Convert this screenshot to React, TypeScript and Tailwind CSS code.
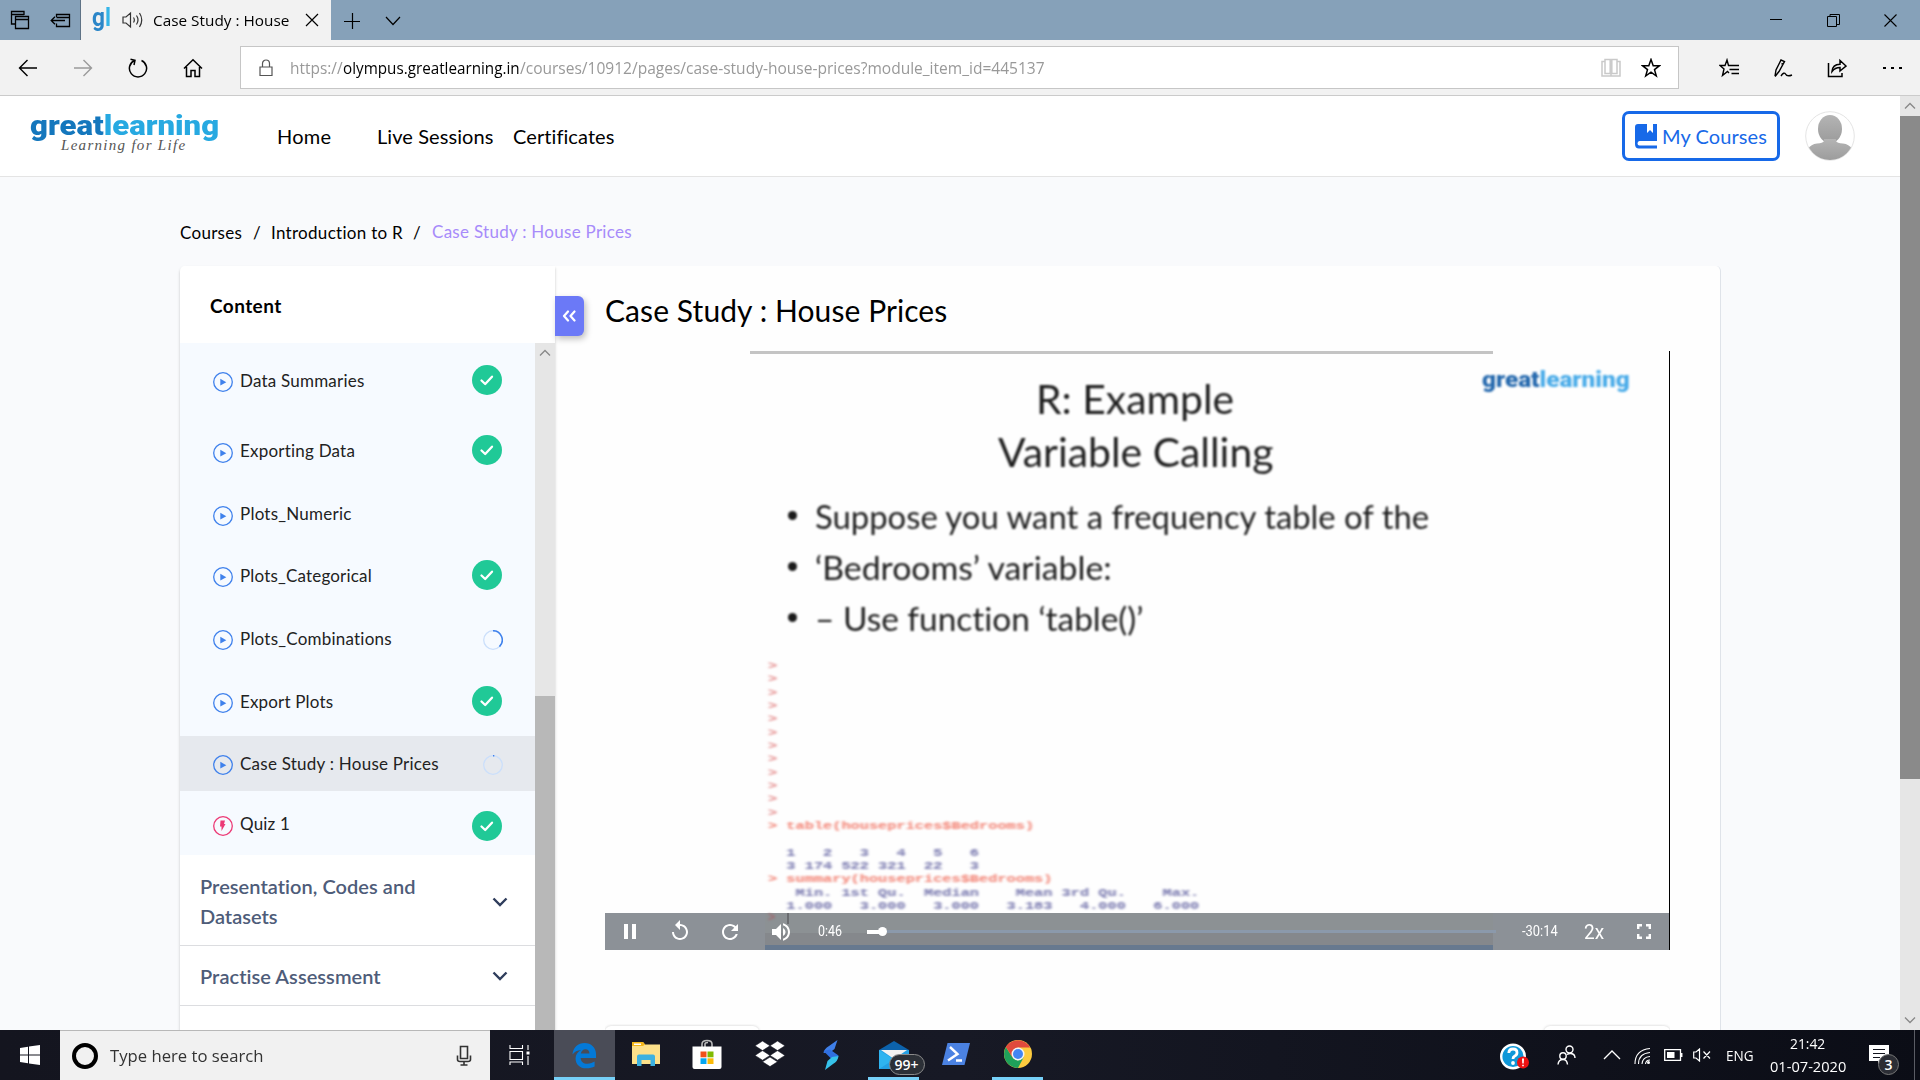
import React, { useLayoutEffect, useRef, useState } from "react";

type FitProps = { w: number; stretch?: boolean; className?: string; children: React.ReactNode };

/** Single line of text adjusted to an exact width, by tracking or by horizontal stretching. */
function Fit({ w, stretch = false, className = "", children }: FitProps) {
  const ref = useRef<HTMLSpanElement>(null);
  const [style, setStyle] = useState<React.CSSProperties>({});
  useLayoutEffect(() => {
    const el = ref.current;
    if (!el) return;
    const natural = el.offsetWidth;
    const n = (el.textContent || "").length;
    if (stretch) setStyle({ transform: `scaleX(${w / natural})` });
    else setStyle({ letterSpacing: `${(w - natural) / n}px` });
  }, [w, stretch]);
  return (
    <span className={`block shrink-0 whitespace-pre ${className}`} style={{ width: w }}>
      <span ref={ref} className="inline-block origin-left" style={style}>
        {children}
      </span>
    </span>
  );
}

const ui = "font-['Open_Sans',sans-serif]";

function Stroke({ w, h, children, className = "", sw = 1.4 }: { w: number; h: number; children: React.ReactNode; className?: string; sw?: number }) {
  return (
    <svg width={w} height={h} viewBox={`0 0 ${w} ${h}`} fill="none" stroke="currentColor" strokeWidth={sw} className={`block shrink-0 ${className}`}>
      {children}
    </svg>
  );
}

function TitleBar() {
  return (
    <div className="flex h-10 items-center bg-[#86a1b9] text-black">
      <div className="flex h-10 w-[81px] items-center border-r border-[#5f7386] pl-[10px]">
        <Stroke w={20} h={20} sw={1.3}>
          <path d="M5 14H1.5V1.5H14V5M1.5 4.5H14" />
          <path d="M5.5 6.5H18.5V18.5H5.5ZM5.5 9.5H18.5" />
        </Stroke>
        <Stroke w={22} h={20} sw={1.3} className="ml-[20px]">
          <path d="M6.500 7V4.500H19.500V16.500H6.500V13.500M6.500 7.500H19.500M1 10.500H15M5 6.800L1.200 10.500L5 14.200" />
        </Stroke>
      </div>
      <div className="flex h-10 w-[250px] items-center bg-[#f2f2f2]">
        <Fit w={19} stretch className="mb-[4px] ml-[11px] font-['Roboto',sans-serif] text-[25px] leading-[24px] font-bold">
          <span className="text-[#2b86c8]">g</span>
          <span className="text-[#35b5e8]">l</span>
        </Fit>
        <Stroke w={22} h={20} sw={1.2} className="ml-[11px] text-[#333]">
          <path d="M1 7H4L8.5 3V17L4 13H1ZM11.5 7.5Q13.2 10 11.5 12.5M14.5 5.5Q17.5 10 14.5 14.5M17.5 3Q22 10 17.5 17" />
        </Stroke>
        <Fit w={136} stretch className={`ml-[9px] ${ui} text-[15px]`}>Case Study : House</Fit>
        <Stroke w={14} h={14} sw={1.2} className="ml-[16px]">
          <path d="M1 1L13 13M13 1L1 13" />
        </Stroke>
      </div>
      <Stroke w={16} h={16} className="mt-px ml-[13px]" sw={1.2}>
        <path d="M8.500 0V16M0 8.500H16" />
      </Stroke>
      <Stroke w={16} h={10} className="mt-px ml-[25px]" sw={1.2}>
        <path d="M1 1L8 8.5L15 1" />
      </Stroke>
      <div className="grow" />
      <Stroke w={12} h={12} sw={1} className="mr-[45px]"><path d="M0 5.5H12" /></Stroke>
      <Stroke w={13} h={13} sw={1} className="mr-[44px]"><path d="M.5 2.5H9.5V12.5H.5ZM3 2.5V.5H12.5V10.5H9.5" /></Stroke>
      <Stroke w={13} h={13} sw={1.1} className="mr-[23px]"><path d="M.5 .5L12.5 12.5M12.5 .5L.5 12.5" /></Stroke>
    </div>
  );
}

function AddressBar() {
  return (
    <div className="flex h-14 items-center border-b border-[#cbcbcb] bg-[#f2f2f2] text-black">
      <Stroke w={20} h={18} className="ml-[18px]"><path d="M9.500 1L1.500 9L9.500 17M1.500 9H19" /></Stroke>
      <Stroke w={20} h={18} className="ml-[35px] text-[#9a9a9a]"><path d="M10.500 1L18.500 9L10.500 17M18.500 9H1" /></Stroke>
      <Stroke w={20} h={20} sw={1.5} className="ml-[35px]"><path d="M6.500 2.500A8.600 8.600 0 1 0 13.500 2.500M2.500 1.200L7 2.300L6 7" /></Stroke>
      <Stroke w={20} h={20} sw={1.5} className="ml-[35px]"><path d="M1 10.500L10 1.800L19 10.500M3.500 9V18.500H8V12.500H12V18.500H16.500V9" /></Stroke>
      <div className="ml-[37px] flex h-[43px] w-[1439px] items-center border border-[#c6c6c6] bg-white">
        <Stroke w={14} h={18} sw={1.2} className="ml-[18px] text-[#555]"><path d="M1 8H13V16.500H1ZM3.500 8V4.500A3.500 3.500 0 0 1 10.500 4.500V8" /></Stroke>
        <div className={`mt-px ml-[17px] flex text-[16px] text-[#999] ${ui}`}>
          <Fit w={53} stretch>https://</Fit>
          <Fit w={177} stretch className="text-black">olympus.greatlearning.in</Fit>
          <Fit w={525} stretch>/courses/10912/pages/case-study-house-prices?module_item_id=445137</Fit>
        </div>
        <div className="grow" />
        <Stroke w={20} h={20} sw={1.5} className="text-[#c9c9c9]"><path d="M4 1.500H9.200V15.500H4ZM10.800 1.500H16V15.500H10.800ZM4 3.500H1V18H19V3.500H16M10 15.500V18" /></Stroke>
        <Stroke w={20} h={20} sw={1.5} className="mr-[17px] ml-[20px]"><path d="M10 1.500L12.200 7.700H18.500L13.500 11.600L15.300 18L10 14.200L4.700 18L6.500 11.600L1.500 7.700H7.800Z" /></Stroke>
      </div>
      <div className="grow" />
      <Stroke w={20} h={20} sw={1.4} className="mr-[34px]"><path d="M11.500 7.500H9.500L8 2L6 7.500H1L5 11L3.500 17.500L8.500 13.500L10 15M11.500 7.500H20M10.500 11.500H20M12.500 15.500H20" /></Stroke>
      <Stroke w={20} h={20} sw={1.4} className="mr-[34px]"><path d="M2 18L3 12L8 2L11.500 3.500L6 13.500L2 18.500M8.500 5.500L10.500 6.500M8 18Q11 13.500 12.500 16Q14 19 19 17" /></Stroke>
      <Stroke w={20} h={20} sw={1.5} className="mr-[36px]"><path d="M1.500 5V18.500H15V15M5 13.500Q5.500 6.500 13 6.300V2.500L19 8L13 13V9.500Q8 9.500 5 13.500Z" /></Stroke>
      <div className="mr-[18px] flex gap-[5px]">
        <i className="h-[2px] w-[3px] bg-black" /><i className="h-[2px] w-[3px] bg-black" /><i className="h-[2px] w-[3px] bg-black" />
      </div>
    </div>
  );
}

function SiteHeader() {
  return (
    <div className="flex h-[81px] shrink-0 border-b border-[#e4e4e4] bg-white">
      <div className="ml-[30px] w-[190px] pt-[17px]">
        <Fit w={189} stretch className="h-[25px] font-['Roboto',sans-serif] text-[28px] leading-[26px] font-black">
          <span className="text-[#1477bd]">great</span>
          <span className="text-[#27a9e1]">learning</span>
        </Fit>
        <Fit w={125} className="ml-[31px] font-['Liberation_Serif',serif] text-[15px] leading-[14px] text-[#555] italic">Learning for Life</Fit>
      </div>
      <div className="mb-px flex items-center text-[20px] text-black">
        <Fit w={54} className="ml-[57px]">Home</Fit>
        <Fit w={116} className="ml-[46px]">Live Sessions</Fit>
        <Fit w={101} className="ml-[20px]">Certificates</Fit>
      </div>
      <div className="grow" />
      <div className="mt-[15px] flex h-[50px] w-[158px] items-center rounded-[7px] border-[3px] border-[#1769e8] pl-[10px] text-[#1769e8]">
        <svg width="23" height="25" viewBox="0 0 23 25" className="block shrink-0" fill="currentColor">
          <path d="M3 0H12V9L15 6L18 9V0H22V17H4.500Q2.500 17 2.500 19.500Q2.500 21.500 4.500 21.500H22V24.500H4Q0 24.500 0 20V3Q0 0 3 0Z" />
        </svg>
        <Fit w={105} className="ml-[4px] text-[20px]">My Courses</Fit>
      </div>
      <svg width="50" height="50" viewBox="0 0 50 50" className="mt-[15px] mr-[45px] ml-[25px] block">
        <defs>
          <clipPath id="face"><circle cx="25" cy="25" r="24" /></clipPath>
          <linearGradient id="grey" x1="0" y1="0" x2="0" y2="1"><stop offset="0" stopColor="#b4b4b4" /><stop offset="1" stopColor="#9b9b9b" /></linearGradient>
        </defs>
        <circle cx="25" cy="25" r="24.300" fill="#fff" stroke="#e4e4e4" />
        <g clipPath="url(#face)" fill="url(#grey)">
          <ellipse cx="25" cy="18" rx="12" ry="14" />
          <path d="M19 28V30Q18 32 12 32.500Q6 33 3 38L6 50H44L47 38Q44 33 38 32.500Q32 32 31 30V28Z" />
        </g>
      </svg>
    </div>
  );
}

type Lesson = { name: string; w: number; h: string; status: "done" | "half" | "started" | "none"; quiz?: boolean; active?: boolean };

const lessons: Lesson[] = [
  { name: "Data Summaries", w: 125, h: "h-[75px]", status: "done" },
  { name: "Exporting Data", w: 115, h: "h-[66px]", status: "done" },
  { name: "Plots_Numeric", w: 112, h: "h-[60px]", status: "none" },
  { name: "Plots_Categorical", w: 132, h: "h-[63px]", status: "done" },
  { name: "Plots_Combinations", w: 152, h: "h-[63px]", status: "half" },
  { name: "Export Plots", w: 93, h: "h-[66px] pb-[3px]", status: "done" },
  { name: "Case Study : House Prices", w: 199, h: "h-[55px]", status: "started", active: true },
  { name: "Quiz 1", w: 50, h: "h-[64px] pt-[2px]", status: "done", quiz: true },
];

function LessonRow({ l }: { l: Lesson }) {
  return (
    <div className={`flex shrink-0 items-center pl-[33px] ${l.h} ${l.active ? "bg-[#e6e9ee]" : ""}`}>
      <svg width="20" height="20" viewBox="0 0 20 20" fill="none" className="mt-[3px] block">
        <circle cx="10" cy="10" r="9.300" stroke={l.quiz ? "#ec3a76" : "#3f81ec"} strokeWidth="1.300" />
        {l.quiz ? <path d="M7.500 4.500H12L11 8H12.500L8.500 15V10.500H7Z" fill="#ec3a76" /> : <path d="M7.300 6.800L13.300 10.200L7.300 13.600Z" fill="#3f81ec" />}
      </svg>
      <Fit w={l.w} className="ml-[7px] text-[17px] text-[#222]">{l.name}</Fit>
      <div className="grow" />
      {l.status === "done" && (
        <svg width="30" height="30" viewBox="0 0 30 30" fill="none" className={`mr-[33px] block ${l.quiz ? "mt-[3px]" : "mb-[2px]"}`}>
          <circle cx="15" cy="15" r="15" fill="#20c997" />
          <path d="M9.500 15.500L13.200 19L20 11.700" stroke="#fff" strokeWidth="2.300" strokeLinecap="round" strokeLinejoin="round" />
        </svg>
      )}
      {(l.status === "half" || l.status === "started") && (
        <svg width="20" height="20" viewBox="0 0 20 20" fill="none" className="mt-[3px] mr-[32px] block">
          <circle cx="10" cy="10" r="9.300" stroke="#cbdffb" strokeWidth="1.300" />
          {l.status === "half" ? <path d="M10 .7A9.300 9.300 0 0 1 16.500 16.600" stroke="#3f81ec" strokeWidth="1.500" /> : <path d="M10 .7H11.300" stroke="#3f81ec" strokeWidth="1.500" />}
        </svg>
      )}
    </div>
  );
}

function Down() {
  return <Stroke w={16} h={10} sw={2.4} className="mt-px mr-[27px] text-[#2f3d5c]"><path d="M1.500 1.500L8 8L14.500 1.500" /></Stroke>;
}

function Sidebar() {
  return (
    <div className="flex w-[375px] shrink-0 flex-col rounded-tl-[5px] bg-white shadow-[0_2px_3px_rgba(0,0,0,0.22)]">
      <div className="flex h-[77px] shrink-0 items-center pl-[30px]">
        <Fit w={72} className="mt-[3px] text-[19px] font-bold text-black">Content</Fit>
      </div>
      <div className="flex min-h-0 grow">
        <div className="flex w-[355px] flex-col overflow-hidden">
          <div className="flex shrink-0 flex-col bg-[#f6faff]">
            {lessons.map((l) => <LessonRow key={l.name} l={l} />)}
          </div>
          <div className="flex h-[91px] shrink-0 items-center justify-between border-b border-[#dcdde0] pt-[2px] pl-5">
            <div className="text-[20px] leading-[30px] font-semibold text-[#4e5c79]">
              <Fit w={216}>Presentation, Codes and</Fit>
              <Fit w={78}>Datasets</Fit>
            </div>
            <Down />
          </div>
          <div className="flex h-[60px] shrink-0 items-center justify-between border-b border-[#dcdde0] pl-5">
            <Fit w={181} className="text-[20px] font-semibold text-[#4e5c79]">Practise Assessment</Fit>
            <Down />
          </div>
        </div>
        <div className="flex w-5 flex-col bg-[#e6e6e6]">
          <Stroke w={12} h={8} sw={1.3} className="mt-[6px] ml-[4px] text-[#888]"><path d="M1 6.500L6 1.500L11 6.500" /></Stroke>
          <div className="mt-[339px] grow bg-[#b8b8b8]" />
        </div>
      </div>
    </div>
  );
}

const consoleLines: [string, string][] = [
  ...Array.from({ length: 12 }, (): [string, string] => [">", ""]),
  ["> table(houseprices$Bedrooms)", "cmd"],
  [" ", ""],
  ["  1   2   3   4   5   6", "out"],
  ["  3 174 522 321  22   3", "out"],
  ["> summary(houseprices$Bedrooms)", "cmd"],
  ["   Min. 1st Qu.  Median    Mean 3rd Qu.    Max.", "out"],
  ["  1.000   3.000   3.000   3.183   4.000   6.000", "out"],
];

function Video() {
  return (
    <div className="relative ml-[50px] h-[599px] w-[1065px] overflow-hidden border-r border-black bg-[#fefefe]">
      <div className="flex h-full w-full flex-col font-['Lato',sans-serif] text-[#1e1e1e]">
        <div className="ml-[145px] h-[3px] w-[743px] shrink-0 bg-[#c4c4c4] blur-[0.5px]" />
        <div className="flex h-[128px] shrink-0">
          <div className="w-[877px] pt-[19px] text-[40px] leading-[53px] blur-[0.9px]">
            <Fit w={198} stretch className="ml-[431px]">R: Example</Fit>
            <Fit w={275} stretch className="ml-[393px]">Variable Calling</Fit>
          </div>
          <Fit w={148} stretch className="mt-[14px] font-['Roboto',sans-serif] text-[22px] leading-[24px] font-black blur-[0.9px]">
            <span className="text-[#2468ad]">great</span>
            <span className="text-[#49abe8]">learning</span>
          </Fit>
        </div>
        <div className="ml-[183px] shrink-0 pt-[9px] text-[33px] leading-[51px] blur-[0.9px] [font-variant-ligatures:none]">
          {([["Suppose you want a frequency table of the", 614], ["‘Bedrooms’ variable:", 297], ["– Use function ‘table()’", 328]] as [string, number][]).map(([t, w]) => (
            <div key={t} className="flex h-[51px] items-center">
              <i className="mb-[3px] mr-[18px] h-[9px] w-[9px] rounded-full bg-[#1a1a1a]" />
              <Fit w={w} stretch>{t}</Fit>
            </div>
          ))}
        </div>
        <div className="mt-[16px] ml-[163px] origin-left scale-x-[1.390] font-['Liberation_Mono',monospace] text-[11px] leading-[13.330px] font-bold whitespace-pre text-[#7474ac] blur-[1px]">
          {consoleLines.map(([t, kind], i) => (
            <div key={i} className={kind === "out" ? "" : kind === "cmd" ? "text-[#f27f70]" : "text-[#e58c8c]"}>{t}</div>
          ))}
        </div>
      </div>
      <div className="absolute inset-x-0 bottom-0 flex h-[37px] items-center bg-[#8c9197] text-white">
        <div className="absolute bottom-0 left-[160px] h-[37px] w-[728px] bg-[#8c9194]">
          <div className="mt-[20px] h-[12px] bg-[#85888c]" />
          <div className="h-[5px] bg-[#67798f]" />
          <div className="absolute top-0 left-[3px] h-[10px] font-['Liberation_Mono',monospace] text-[12px] leading-[10px] font-bold text-[#a06a70] blur-[0.8px]">&gt;</div>
          <div className="absolute top-0 left-[22px] h-[11px] w-[2px] bg-[#6a6c70] blur-[0.6px]" />
        </div>
        <div className="relative flex w-full items-center">
          <svg width="12" height="15" className="ml-[19px] block" fill="#fff"><path d="M0 0H4V15H0ZM8 0H12V15H8Z" /></svg>
          <svg width="24" height="24" viewBox="0 0 24 24" className="mb-[2px] ml-[32px] block" fill="#fff"><path d="M12 5V1L7 6l5 5V7c3.310 0 6 2.690 6 6s-2.690 6-6 6-6-2.690-6-6H4c0 4.420 3.580 8 8 8s8-3.580 8-8-3.580-8-8-8z" /></svg>
          <svg width="24" height="24" viewBox="0 0 24 24" className="ml-[26px] block" fill="#fff"><path d="M17.650 6.350C16.200 4.900 14.210 4 12 4c-4.420 0-7.990 3.580-7.990 8s3.570 8 7.990 8c3.730 0 6.840-2.550 7.730-6h-2.080c-.82 2.330-3.040 4-5.650 4-3.310 0-6-2.690-6-6s2.690-6 6-6c1.660 0 3.140.69 4.220 1.780L13 11h7V4l-2.350 2.350z" /></svg>
          <svg width="24" height="24" viewBox="0 0 24 24" className="ml-[27px] block" fill="#fff"><path d="M3 9v6h4l5 5V4L7 9H3zm13.500 3c0-1.770-1.020-3.290-2.500-4.030v8.050c1.480-.73 2.500-2.250 2.500-4.020zM14 3.230v2.060c2.890.86 5 3.540 5 6.710s-2.110 5.850-5 6.710v2.060c4.010-.91 7-4.490 7-8.770s-2.990-7.860-7-8.770z" /></svg>
          <Fit w={24} stretch className="ml-[25px] font-['Roboto',sans-serif] text-[14px]">0:46</Fit>
          <div className="ml-[25px] flex h-[10px] w-[629px] items-center">
            <div className="h-[4px] w-[12px] bg-white" />
            <div className="-ml-px h-[9px] w-[9px] rounded-full bg-white" />
            <div className="h-[3px] grow bg-[#8b99ab]" />
          </div>
          <Fit w={36} stretch className="ml-[26px] font-['Roboto',sans-serif] text-[14px]">-30:14</Fit>
          <Fit w={20} stretch className="ml-[26px] font-['Roboto',sans-serif] text-[20px]">2x</Fit>
          <svg width="14" height="15" viewBox="0 0 14 15" fill="none" stroke="#fff" strokeWidth="2.400" className="ml-[33px] block"><path d="M1.200 5V1.200H5M9 1.200H12.800V5M12.800 10V13.800H9M5 13.800H1.200V10" /></svg>
        </div>
      </div>
    </div>
  );
}

function Page() {
  return (
    <div className="flex h-[934px]">
      <div className="flex w-[1900px] flex-col bg-[#f9fafc] font-['Lato',sans-serif]">
        <SiteHeader />
        <div className="flex h-[89px] shrink-0 items-center pl-[180px] text-[17px] text-black">
          <Fit w={62} className="mt-[23px]">Courses</Fit>
          <span className="mt-[23px] ml-[11px] w-[8px]">/</span>
          <Fit w={132} className="mt-[23px] ml-[10px]">Introduction to R</Fit>
          <span className="mt-[23px] ml-[10px] w-[8px]">/</span>
          <Fit w={200} className="mt-[21px] ml-[11px] text-[#a78bfa]">Case Study : House Prices</Fit>
        </div>
        <div className="ml-[180px] flex min-h-0 w-[1541px] grow rounded-t-[5px] border-r border-[#dfe3e9] bg-[#fefefe]">
          <Sidebar />
          <div className="flex w-[1165px] flex-col">
            <div className="flex h-[85px] shrink-0">
              <div className="mt-[30px] flex h-10 w-[29px] items-center justify-center rounded-r-[6px] bg-[#6b79f7] pr-[2px] shadow-[2px_3px_6px_rgba(0,0,0,0.25)]">
                <Stroke w={14} h={12} sw={2.2} className="text-white"><path d="M6 1.500L2 6L6 10.500M12.500 1.500L8.500 6L12.500 10.500" strokeLinecap="round" strokeLinejoin="round" /></Stroke>
              </div>
              <Fit w={342} className="mt-[24px] ml-[21px] text-[30px] leading-[40px] text-black">Case Study : House Prices</Fit>
            </div>
            <Video />
            <div className="mt-[74px] ml-[50px] flex h-[6px] w-[1065px] justify-between overflow-hidden pt-[2px]">
              <div className="h-[40px] w-[154px] rounded-[6px] bg-white shadow-[0_0_3px_rgba(0,0,0,0.2)]" />
              <div className="h-[40px] w-[126px] rounded-[6px] bg-white shadow-[0_0_3px_rgba(0,0,0,0.2)]" />
            </div>
          </div>
        </div>
      </div>
      <div className="flex w-5 flex-col items-center bg-[#e6e6e6] text-[#888]">
        <Stroke w={12} h={8} sw={1.3} className="mt-[6px] mb-[6px]"><path d="M1 6.500L6 1.500L11 6.500" /></Stroke>
        <div className="h-[663px] w-5 bg-[#8a8a8a]" />
        <Stroke w={12} h={8} sw={1.3} className="mt-auto mb-[6px]"><path d="M1 1.500L6 6.500L11 1.500" /></Stroke>
      </div>
    </div>
  );
}

function Pinned({ w, ml, line = false, hot = false, children }: { w: string; ml: string; line?: boolean; hot?: boolean; children: React.ReactNode }) {
  return (
    <div className={`flex h-[50px] shrink-0 flex-col items-center ${w} ${ml} ${hot ? "bg-[#4a4c57]" : ""}`}>
      <div className="flex h-[47px] items-center justify-center pt-[3px]">{children}</div>
      {line && <div className="h-[3px] w-full bg-[#76d0f8]" />}
    </div>
  );
}

function Taskbar() {
  return (
    <div className={`flex h-[50px] items-center bg-linear-to-r from-[#14151f] via-[#171925] via-50% to-[#0b0d16] text-white ${ui}`}>
      <div className="flex w-[60px] justify-center">
        <svg width="20" height="20" viewBox="0 0 20 20" fill="#fff"><path d="M0 3L8 1.700V9.400H0ZM9 1.500L20 0V9.400H9ZM0 10.400H8V18.200L0 17ZM9 10.400H20V20L9 18.400Z" /></svg>
      </div>
      <div className="flex h-[50px] w-[430px] items-center border-t border-[#b8b8b8] bg-[#f1f1f1]">
        <div className="ml-[12px] h-[26px] w-[26px] rounded-full border-[4px] border-black" />
        <Fit w={153} stretch className="ml-[12px] text-[17px] text-[#333]">Type here to search</Fit>
        <Stroke w={16} h={22} sw={1.6} className="ml-[193px] text-[#333]"><path d="M4.500 1.500H11.500V13.500H4.500ZM1.500 10.500V14.500Q1.500 16.500 4 16.500H12Q14.500 16.500 14.500 14.500V10.500M8 16.500V20M4.500 20H11.500" /></Stroke>
      </div>
      <Stroke w={22} h={20} sw={1.1} className="ml-[19px]"><path d="M1 0V3.500H13.500V0M1 6.500H13.500V14.500H1ZM1 20V17H13.500V20M19 0V5M19 11V20" /><path d="M17.500 6.500H20.500V9.500H17.500Z" fill="#fff" stroke="none" /></Stroke>
      <Pinned w="w-[61px]" ml="ml-[23px]" line hot>
        <svg width="25" height="27" viewBox="0 0 26 27" className="mr-px"><path d="M.5 12.500C1 5 6.500 .5 13 .5C20 .5 25 5.500 25 12V16H9C9.200 20 12 22 16 22C19 22 21.500 21 23.500 19.800V25C21 26.300 18.500 26.800 15 26.800C8 26.800 3.700 22.500 3.700 16.500C3.700 12.500 6 9.500 9.500 8C5.500 8 2.500 9.500 .5 12.500ZM9.200 11.500H18.200C18 8.500 16.500 7 14 7C11.500 7 9.700 8.800 9.200 11.500Z" fill="#0479d7" /></svg>
      </Pinned>
      <Pinned w="w-[51px]" ml="ml-[5px]">
        <svg width="28" height="24" viewBox="0 0 28 24" className="mb-[2px]"><path d="M0 0H11L13 2.500H28V22H0Z" fill="#fce08a" /><path d="M0 0H11L13 2.500L11 4H0Z" fill="#f4b619" /><path d="M2 1.500H9V3H2Z" fill="#fff" /><path d="M5 24V14.500Q5 12.500 7 12.500H21Q23 12.500 23 14.500V24H18.500V18H9.500V24Z" fill="#3cb1e0" /></svg>
      </Pinned>
      <Pinned w="w-[51px]" ml="ml-[11px]">
        <svg width="30" height="30" viewBox="0 0 30 30" className="mr-px mb-[2px] block"><path d="M10 8V5Q10 1.500 15 1.500Q20 1.500 20 5V8M13 8V5Q13 3.500 16 3.500" fill="none" stroke="#bbb" strokeWidth="1.600" /><path d="M.5 7.500H29.500V28Q29.500 30 27.500 30H2.500Q.5 30 .5 28Z" fill="#fff" /><path d="M8.500 12.500H14.500V18.300H8.500Z" fill="#f1511b" /><path d="M15.500 12.500H21.500V18.300H15.500Z" fill="#80bb01" /><path d="M8.500 19.300H14.500V25H8.500Z" fill="#05a6f0" /><path d="M15.500 19.300H21.500V25H15.500Z" fill="#fbba08" /></svg>
      </Pinned>
      <Pinned w="w-[51px]" ml="ml-[11px]">
        <svg width="30" height="26" viewBox="0 0 30 26" fill="#fff" className="mb-[2px]"><path d="M7.500 0L15 4.800L7.500 9.600L0 4.800ZM22.500 0L30 4.800L22.500 9.600L15 4.800ZM7.500 9.600L15 14.400L7.500 19.200L0 14.400ZM22.500 9.600L30 14.400L22.500 19.200L15 14.400ZM15 16L22.500 20.800L15 25.600L7.500 20.800Z" stroke="#171925" strokeWidth=".6" /></svg>
      </Pinned>
      <Pinned w="w-[51px]" ml="ml-[11px]">
        <svg width="16" height="30" viewBox="0 0 16 30" className="mr-px mb-px"><path d="M14.500 0L11.500 9L7 12.500L0.500 13Q1 9 6 6Z" fill="#3f7fe8" /><path d="M.5 11L7 9.500L15.500 15.500L14 20L8 18.500Z" fill="#2f6fe0" /><path d="M15.500 16Q15 21 10 24L2 30L4.500 21L9 17Z" fill="#36c2ea" /></svg>
      </Pinned>
      <Pinned w="w-[51px]" ml="ml-[11px]" line>
        <div className="relative">
          <svg width="30" height="28" viewBox="0 0 30 28" className="block"><path d="M0 9L15 0L30 9V28H0Z" fill="#0c62ab" /><path d="M0 9H30V28H0Z" fill="#24a0e4" /><path d="M2 9H28L15 18Z" fill="#f2f2f2" /><path d="M0 9L15 18.500L0 28Z" fill="#2fb4f0" /></svg>
          <div className="absolute top-[13px] left-[10px] flex h-[21px] w-[36px] items-center justify-center rounded-full border border-[#8b8b8b] bg-[#2c3037] text-[14px] font-semibold">99+</div>
        </div>
      </Pinned>
      <Pinned w="w-[51px]" ml="ml-[11px]">
        <svg width="28" height="22" viewBox="0 0 28 22" className="mb-[2px]"><path d="M5.500 0H28L22.500 22H0Z" fill="#4b82e2" /><path d="M8 4L15.500 11L6 17.500M14 17.500H20" fill="none" stroke="#fff" strokeWidth="2.400" /></svg>
      </Pinned>
      <Pinned w="w-[51px]" ml="ml-[11px]" line>
        <svg width="28" height="28" viewBox="0 0 28 28" className="mb-[2px]"><circle cx="14" cy="14" r="14" fill="#fdcb3f" /><path d="M14 14L1.900 7A14 14 0 0 1 26.100 7.500H14Z" fill="#e04a3c" /><path d="M14 20.500L8.400 17.200L1.900 7A14 14 0 0 0 14 28L19.700 17.300Z" fill="#1fa15a" /><path d="M1.900 7L8.400 17.200L14 14V7.500L5 3.500Z" fill="#e04a3c" /><circle cx="14" cy="14" r="6.500" fill="#f4f4f4" /><circle cx="14" cy="14" r="5" fill="#4285f4" /></svg>
      </Pinned>
      <div className="grow" />
      <svg width="29" height="27" viewBox="0 0 29 27" className="mt-[3px] block"><circle cx="13" cy="13.500" r="11.800" fill="#0f97d8" stroke="#fff" strokeWidth="2.400" /><path d="M8.800 10Q9 6 13 6Q17 6 17 9.700Q17 12 14.500 13.200Q13 14 13 16" fill="none" stroke="#fff" strokeWidth="2.800" /><circle cx="13" cy="20" r="1.900" fill="#fff" /><circle cx="23" cy="19.500" r="6" fill="#ee1111" /><path d="M22 15.500H24L23.700 20.500H22.300ZM22.200 21.700H23.800V23.300H22.200Z" fill="#fff" /></svg>
      <Stroke w={19} h={20} sw={1.4} className="ml-[28px]"><circle cx="12.500" cy="4.500" r="3.500" /><circle cx="6" cy="11" r="3.200" /><path d="M1 19.500Q1.500 14.500 6 14.500Q10 14.500 10.500 19.500M10 9.500Q12 8.200 14 8.500Q18 9 18 13" /></Stroke>
      <Stroke w={18} h={10} sw={1.3} className="ml-[27px]"><path d="M1 9L9 1L17 9" /></Stroke>
      <Stroke w={18} h={18} sw={1.1} className="mt-px ml-[13px]"><path d="M1 17Q1 3 16 1.500M4.500 17Q4.500 6.500 16 5.500M8 17Q8.500 10 16 9.500M11.500 17Q12 13 16 13" /><circle cx="14.500" cy="15.500" r="1.500" fill="#fff" stroke="none" /></Stroke>
      <Stroke w={19} h={12} sw={1.3} className="ml-[12px]"><path d="M.7 .7H16.500V11.300H.7ZM17.800 4V8" /><path d="M3 3H10.500V9H3Z" fill="#fff" stroke="none" /></Stroke>
      <Stroke w={18} h={14} sw={1.2} className="ml-[10px]"><path d="M.7 4H3L6.500 1V13L3 10H.7ZM10.500 3.500L17 10.500M17 3.500L10.500 10.500" /></Stroke>
      <Fit w={28} stretch className="ml-[15px] text-[15px]">ENG</Fit>
      <div className="ml-[16px] flex w-[76px] flex-col items-center text-[15px] leading-[23px]">
        <Fit w={35} stretch className="mr-[2px]">21:42</Fit>
        <Fit w={76} stretch>01-07-2020</Fit>
      </div>
      <div className="relative mr-[15px] ml-[23px] h-[50px] w-[30px]">
        <svg width="20" height="20" viewBox="0 0 20 20" className="mt-[15px] block"><path d="M0 0H20V16H12L9 19V16H0Z" fill="#fff" /><path d="M4 4.500H16M4 8.500H16M4 12.500H11" stroke="#11131c" strokeWidth="1.200" /></svg>
        <div className="absolute top-[24px] left-[9px] flex h-[21px] w-[21px] items-center justify-center rounded-full border border-[#777] bg-[#2c2e35] text-[14px] font-semibold">3</div>
      </div>
      <div className="mr-[5px] h-[50px] w-px bg-[#5a5c64]" />
    </div>
  );
}

export default function App() {
  return (
    <div className="flex h-[1080px] w-[1920px] flex-col overflow-hidden">
      <TitleBar />
      <AddressBar />
      <Page />
      <Taskbar />
    </div>
  );
}
